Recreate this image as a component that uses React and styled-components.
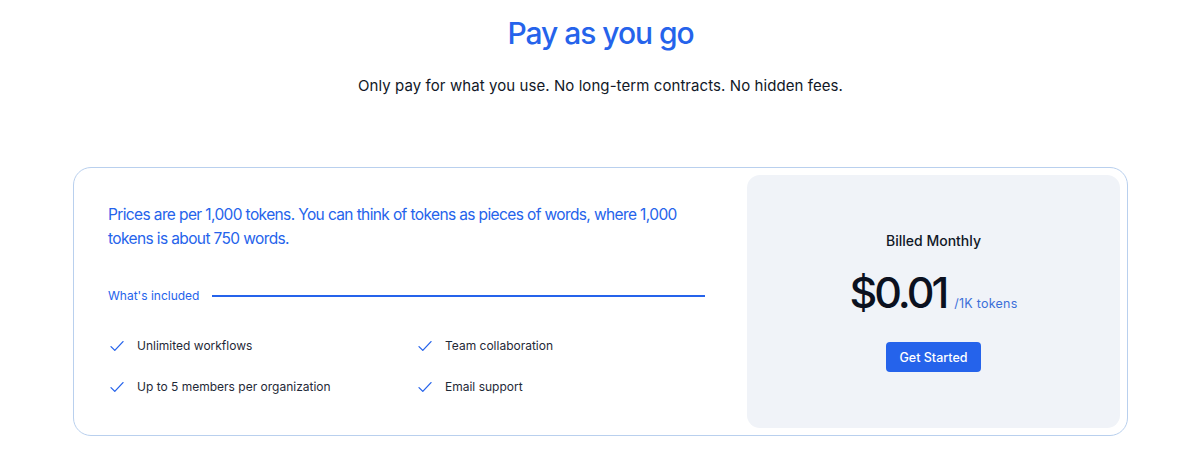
import React from "react";
import styled, { createGlobalStyle } from "styled-components";

const Global = createGlobalStyle`
  html, body { margin: 0; padding: 0; background: #ffffff; }
  body { font-family: Inter, "Noto Sans", sans-serif; color: #0f172a; -webkit-font-smoothing: antialiased; }
`;

const Page = styled.main`
  width: 1200px;
  box-sizing: border-box;
  padding: 14px 72px 0 73px;
  display: flex;
  flex-direction: column;
  align-items: center;
`;

const Title = styled.h1`
  margin: 0;
  font-size: 30px;
  line-height: 38px;
  font-weight: 500;
  letter-spacing: -0.035em;
  color: #2563eb;
`;

const Subtitle = styled.p`
  margin: 22px 0 0 0;
  font-size: 15px;
  line-height: 24px;
  color: #111827;
  letter-spacing: 0.005em;
`;

const Card = styled.section`
  margin-top: 69px;
  width: 100%;
  box-sizing: border-box;
  border: 1px solid #b9d0ee;
  border-radius: 18px;
  padding: 7px 7px 7px 34px;
  display: flex;
  gap: 42px;
`;

const Left = styled.div`
  width: 597px;
  padding-top: 28px;
  display: flex;
  flex-direction: column;
`;

const Intro = styled.p`
  margin: 0;
  font-size: 15.5px;
  line-height: 24px;
  letter-spacing: -0.04em;
  color: #2563eb;
  max-width: 590px;
`;

const IncludedRow = styled.div`
  margin-top: 37px;
  display: flex;
  align-items: center;
  gap: 13px;
`;

const IncludedLabel = styled.span`
  font-size: 12px;
  line-height: 16px;
  color: #2563eb;
  white-space: nowrap;
`;

const Rule = styled.div`
  flex: 1;
  height: 1.5px;
  background: #2563eb;
`;

const Features = styled.ul`
  list-style: none;
  margin: 32px 0 0 0;
  padding: 0 0 0 2px;
  display: grid;
  grid-template-columns: 308px 1fr;
  row-gap: 21px;
`;

const Feature = styled.li`
  display: flex;
  align-items: center;
  gap: 13px;
  font-size: 12px;
  line-height: 20px;
  color: #1f2937;
`;

const CheckIcon = () => (
  <svg width="14" height="14" viewBox="0 0 14 14" fill="none">
    <path d="M1 7.6 L4.8 11.4 L13 2.6" stroke="#2563eb" strokeWidth="1.3" strokeLinecap="round" strokeLinejoin="round" />
  </svg>
);

const Right = styled.div`
  flex: 1;
  min-height: 253px;
  background: #f0f3f8;
  border-radius: 13px;
  display: flex;
  flex-direction: column;
  align-items: center;
  justify-content: center;
  box-sizing: border-box;
`;

const Billed = styled.div`
  font-size: 14px;
  line-height: 20px;
  font-weight: 500;
  color: #111827;
`;

const PriceRow = styled.div`
  margin-top: 16px;
  display: flex;
  align-items: baseline;
  gap: 8px;
`;

const Price = styled.span`
  font-size: 43px;
  line-height: 50px;
  font-weight: 500;
  letter-spacing: -0.07em;
  color: #0b1120;
`;

const Unit = styled.span`
  font-size: 12.5px;
  color: #3b6fd8;
  letter-spacing: 0.02em;
`;

const Button = styled.button`
  margin-top: 25px;
  height: 30px;
  padding: 0 13px;
  border: none;
  border-radius: 4px;
  background: #2563eb;
  color: #ffffff;
  font-family: inherit;
  font-size: 12.5px;
  font-weight: 500;
  cursor: pointer;
`;

const features = [
  "Unlimited workflows",
  "Team collaboration",
  "Up to 5 members per organization",
  "Email support",
];

export default function App() {
  return (
    <>
      <Global />
      <Page>
        <Title>Pay as you go</Title>
        <Subtitle>Only pay for what you use. No long-term contracts. No hidden fees.</Subtitle>
        <Card>
          <Left>
            <Intro>
              Prices are per 1,000 tokens. You can think of tokens as pieces of words, where 1,000 tokens is about 750 words.
            </Intro>
            <IncludedRow>
              <IncludedLabel>What's included</IncludedLabel>
              <Rule />
            </IncludedRow>
            <Features>
              {features.map((f) => (
                <Feature key={f}>
                  <CheckIcon />
                  {f}
                </Feature>
              ))}
            </Features>
          </Left>
          <Right>
            <Billed>Billed Monthly</Billed>
            <PriceRow>
              <Price>$0.01</Price>
              <Unit>/1K tokens</Unit>
            </PriceRow>
            <Button>Get Started</Button>
          </Right>
        </Card>
      </Page>
    </>
  );
}
